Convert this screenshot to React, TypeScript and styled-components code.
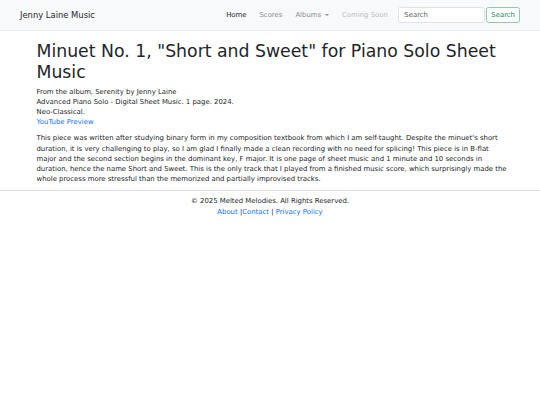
import styled, { createGlobalStyle } from 'styled-components';

const GlobalStyle = createGlobalStyle`
  html, body {
    margin: 0;
    padding: 0;
    background: #fff;
  }
  body {
    font-family: "DejaVu Sans", Verdana, sans-serif;
    font-size: 6.9px;
    line-height: 1.48;
    color: #212529;
  }
  * { box-sizing: border-box; }
`;

// --- Navbar ---
const NavBar = styled.nav`
  background: #f8f9fa;
  border-bottom: 1px solid #e9ecef;
  height: 31px;
  display: flex;
  align-items: center;
  padding: 0 20px 0 20px;
`;

const Brand = styled.a`
  font-size: 8.4px;
  color: #212529;
  text-decoration: none;
  margin-right: auto;
`;

const NavLinks = styled.ul`
  display: flex;
  list-style: none;
  margin: 0 4px 0 0;
  padding: 0;
`;

const NavLink = styled.a<{ $active?: boolean; $disabled?: boolean }>`
  display: block;
  padding: 0 6.5px;
  color: ${({ $active, $disabled }) =>
    $active ? '#212529' : $disabled ? '#b8bcc0' : '#888d92'};
  text-decoration: none;
`;

const Caret = styled.span`
  display: inline-block;
  margin-left: 4px;
  width: 0;
  height: 0;
  vertical-align: 1px;
  border-left: 2px solid transparent;
  border-right: 2px solid transparent;
  border-top: 2px solid currentColor;
`;

const SearchForm = styled.form`
  display: flex;
  gap: 1px;
`;

const SearchInput = styled.input`
  width: 87px;
  height: 16px;
  padding: 0 5px;
  font: inherit;
  color: #212529;
  border: 1px solid #dee2e6;
  border-radius: 2.5px;
  background: #fff;
  &::placeholder { color: #595c5f; }
`;

const SearchButton = styled.button`
  height: 16px;
  padding: 0 4px;
  font: inherit;
  color: #198754;
  background: #fff;
  border: 1px solid #8fc9a9;
  border-radius: 2.5px;
`;

// --- Content ---
const Container = styled.main`
  width: 481px;
  margin: 0 auto;
  padding: 8px 2px 0 7px;
`;

const Title = styled.h1`
  font-size: 17.3px;
  font-weight: 400;
  line-height: 1.2;
  margin: 2px 0 4px;
`;

const Meta = styled.p`
  margin: 0;
`;

const Link = styled.a`
  color: #0d6efd;
  text-decoration: none;
`;

const Body = styled.p`
  margin: 6px 0 6px;
`;

// --- Footer ---
const Footer = styled.footer`
  border-top: 1px solid #dee2e6;
  text-align: center;
  padding-top: 5px;
`;

export default function App() {
  return (
    <>
      <GlobalStyle />
      <NavBar>
        <Brand href="#">Jenny Laine Music</Brand>
        <NavLinks>
          <li><NavLink $active href="#">Home</NavLink></li>
          <li><NavLink href="#">Scores</NavLink></li>
          <li><NavLink href="#">Albums<Caret /></NavLink></li>
          <li><NavLink $disabled href="#">Coming Soon</NavLink></li>
        </NavLinks>
        <SearchForm onSubmit={(e) => e.preventDefault()}>
          <SearchInput type="search" placeholder="Search" />
          <SearchButton type="submit">Search</SearchButton>
        </SearchForm>
      </NavBar>
      <Container>
        <Title>Minuet No. 1, "Short and Sweet" for Piano Solo Sheet Music</Title>
        <Meta>From the album, Serenity by Jenny Laine</Meta>
        <Meta>Advanced Piano Solo - Digital Sheet Music. 1 page. 2024.</Meta>
        <Meta>Neo-Classical.</Meta>
        <Meta><Link href="#">YouTube Preview</Link></Meta>
        <Body>
          This piece was written after studying binary form in my composition textbook from which I am
          self-taught. Despite the minuet's short duration, it is very challenging to play, so I am glad I
          finally made a clean recording with no need for splicing! This piece is in B-flat major and the
          second section begins in the dominant key, F major. It is one page of sheet music and 1 minute and
          10 seconds in duration, hence the name Short and Sweet. This is the only track that I played from a
          finished music score, which surprisingly made the whole process more stressful than the memorized
          and partially improvised tracks.
        </Body>
      </Container>
      <Footer>
        <Meta>© 2025 Melted Melodies. All Rights Reserved.</Meta>
        <Meta>
          <Link href="#">About</Link> |<Link href="#">Contact</Link> | <Link href="#">Privacy Policy</Link>
        </Meta>
      </Footer>
    </>
  );
}
